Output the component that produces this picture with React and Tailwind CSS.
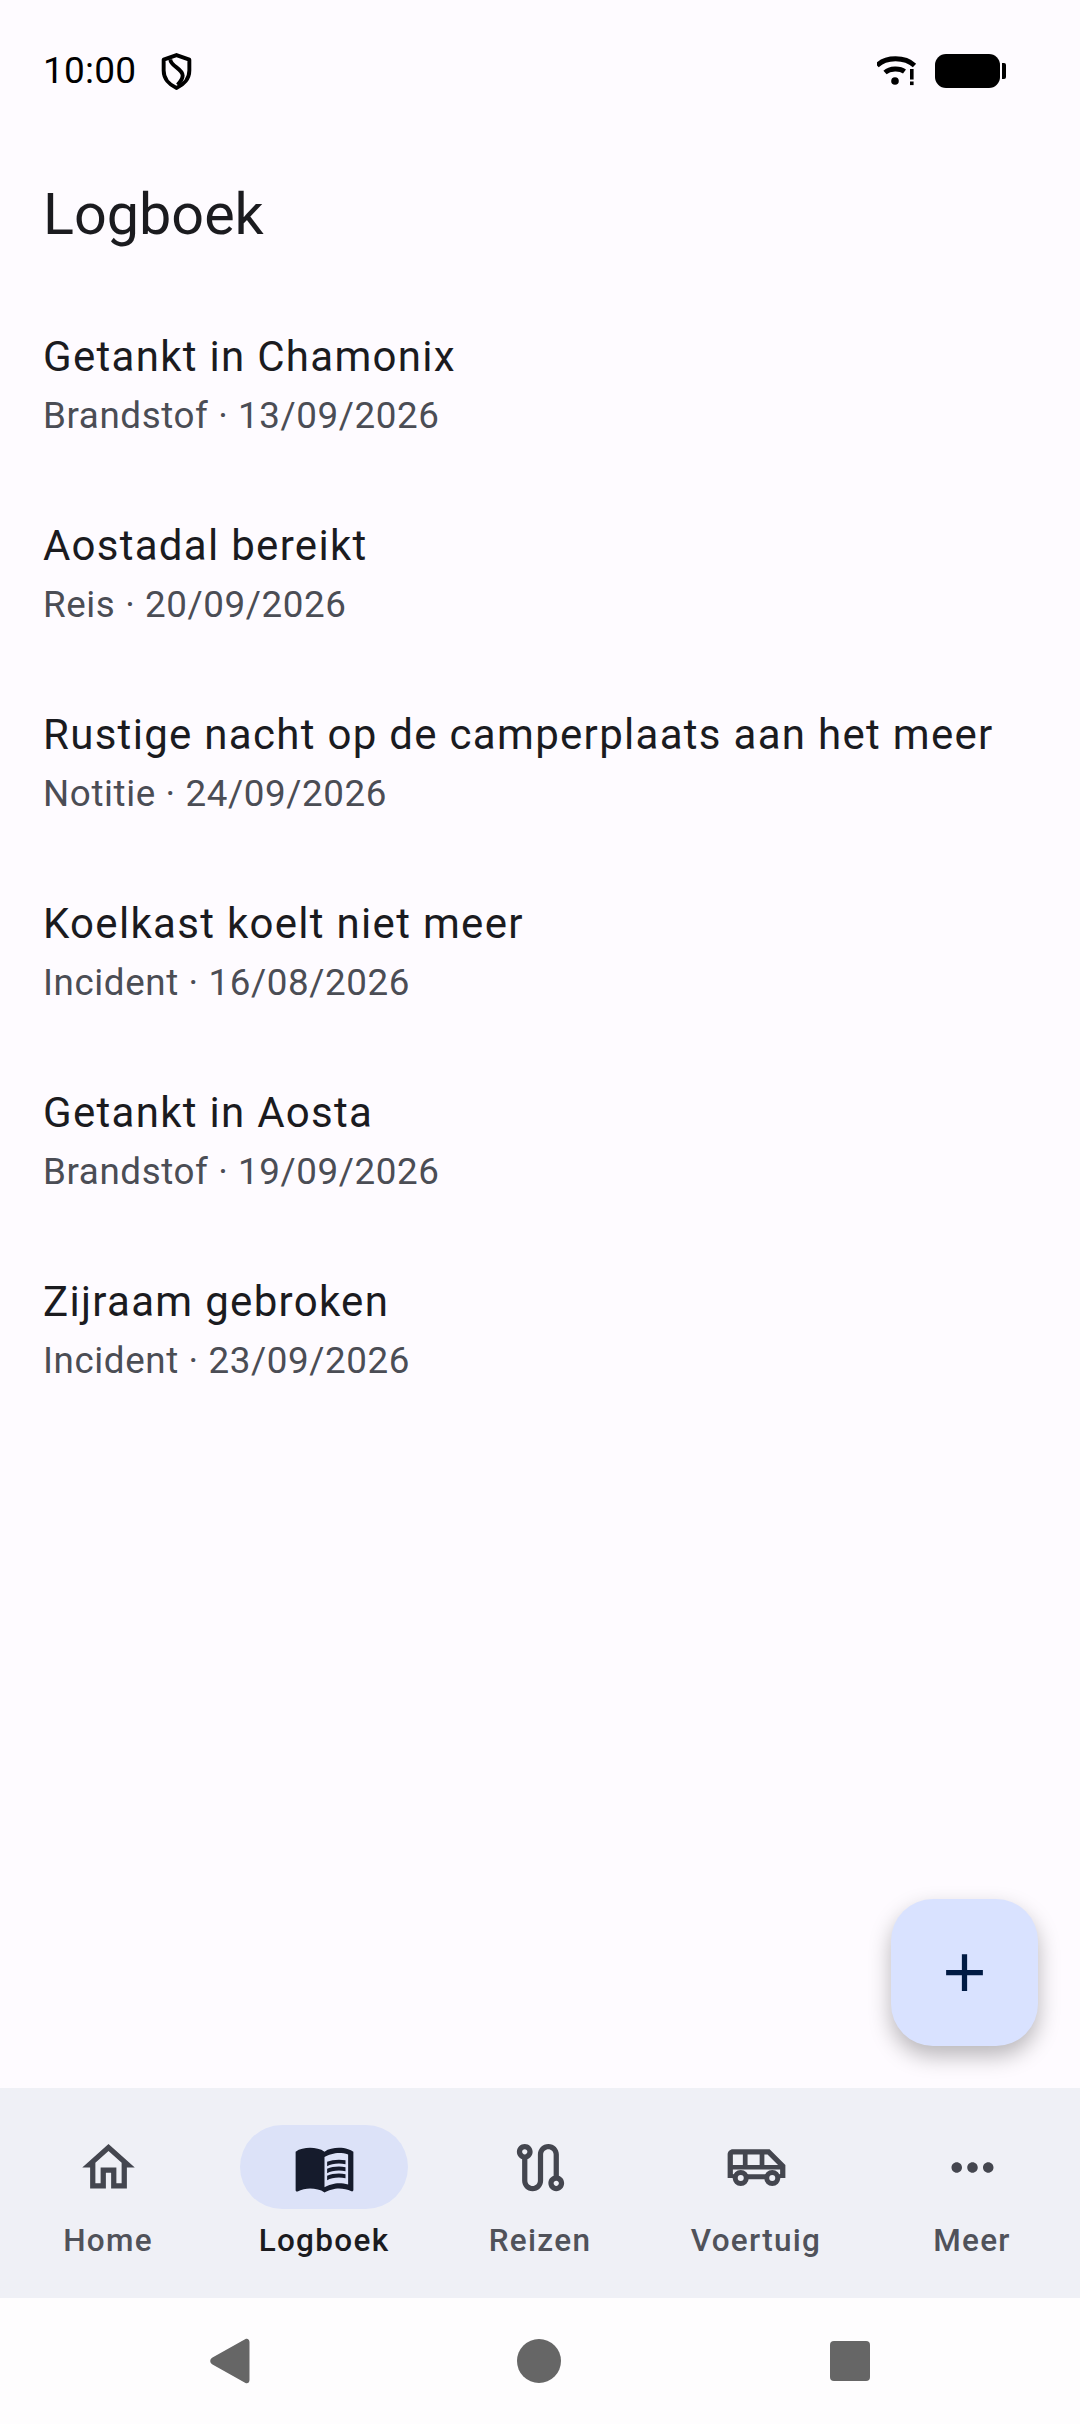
import React from 'react';

const entries = [
  { title: 'Getankt in Chamonix', sub: 'Brandstof · 13/09/2026' },
  { title: 'Aostadal bereikt', sub: 'Reis · 20/09/2026' },
  { title: 'Rustige nacht op de camperplaats aan het meer', sub: 'Notitie · 24/09/2026' },
  { title: 'Koelkast koelt niet meer', sub: 'Incident · 16/08/2026' },
  { title: 'Getankt in Aosta', sub: 'Brandstof · 19/09/2026' },
  { title: 'Zijraam gebroken', sub: 'Incident · 23/09/2026' },
];

const HomeIcon = () => (
  <svg viewBox="0 0 24 24" className="w-[63px] h-[63px]" fill="#44464f">
    <path d="M12 5.69l5 4.5V18h-2v-6H9v6H7v-7.81l5-4.5M12 3L2 12h3v8h6v-6h2v6h6v-8h3L12 3z" />
  </svg>
);

const BookIcon = () => (
  <svg viewBox="0 0 24 24" className="w-[63px] h-[63px]" fill="#151b2c">
    <path d="M21 5c-1.11-.35-2.33-.5-3.5-.5-1.95 0-4.05.4-5.5 1.5-1.45-1.1-3.55-1.5-5.5-1.5S2.45 4.9 1 6v14.65c0 .25.25.5.5.5.1 0 .15-.05.25-.05C3.1 20.45 5.05 20 6.5 20c1.95 0 4.05.4 5.5 1.5 1.35-.85 3.8-1.5 5.5-1.5 1.65 0 3.35.3 4.75 1.05.1.05.15.05.25.05.25 0 .5-.25.5-.5V6c-.6-.45-1.25-.75-2-1zm0 13.5c-1.1-.35-2.3-.5-3.5-.5-1.7 0-4.15.65-5.5 1.5V8c1.35-.85 3.8-1.5 5.5-1.5 1.2 0 2.4.15 3.5.5v11.5z" />
    <path d="M17.5 10.5c.88 0 1.73.09 2.5.26V9.24c-.79-.15-1.64-.24-2.5-.24-1.7 0-3.24.29-4.5.83v1.66c1.13-.64 2.7-.99 4.5-.99zM13 12.49v1.66c1.13-.64 2.7-.99 4.5-.99.88 0 1.73.09 2.5.26V11.9c-.79-.15-1.64-.24-2.5-.24-1.7 0-3.24.3-4.5.83zM17.5 14.33c-1.7 0-3.24.29-4.5.83v1.66c1.13-.64 2.7-.99 4.5-.99.88 0 1.73.09 2.5.26v-1.52c-.79-.16-1.64-.24-2.5-.24z" />
  </svg>
);

const RouteIcon = () => (
  <svg viewBox="0 0 24 24" className="w-[63px] h-[63px]" fill="#44464f">
    <path d="M19 15.18V7c0-2.21-1.79-4-4-4s-4 1.79-4 4v10c0 1.1-.9 2-2 2s-2-.9-2-2V8.82C8.16 8.4 9 7.3 9 6c0-1.66-1.34-3-3-3S3 4.34 3 6c0 1.3.84 2.4 2 2.82V17c0 2.21 1.79 4 4 4s4-1.79 4-4V7c0-1.1.9-2 2-2s2 .9 2 2v8.18c-1.16.41-2 1.51-2 2.82 0 1.66 1.34 3 3 3s3-1.34 3-3c0-1.3-.84-2.4-2-2.82zM6 7c-.55 0-1-.45-1-1s.45-1 1-1 1 .45 1 1-.45 1-1 1zm12 12c-.55 0-1-.45-1-1s.45-1 1-1 1 .45 1 1-.45 1-1 1z" />
  </svg>
);

const VanIcon = () => (
  <svg viewBox="0 0 24 24" className="w-[63px] h-[63px]" fill="#44464f">
    <path
      fillRule="evenodd"
      d="M17 5H3c-1.1 0-2 .9-2 2v9h2v.5h18V16h2v-5zM3 7h3.8v4H3zM8.6 7h4.6v4H8.6zM15 7h1.2l4 4H15zM3 12.8h18V14.6H3z"
    />
    <circle cx="6" cy="16" r="2.1" fill="#eff0f6" stroke="#44464f" strokeWidth="1.9" />
    <circle cx="18" cy="16" r="2.1" fill="#eff0f6" stroke="#44464f" strokeWidth="1.9" />
  </svg>
);

const MoreIcon = () => (
  <svg viewBox="0 0 24 24" className="w-[63px] h-[63px]" fill="#44464f">
    <path d="M6 10c-1.1 0-2 .9-2 2s.9 2 2 2 2-.9 2-2-.9-2-2-2zm12 0c-1.1 0-2 .9-2 2s.9 2 2 2 2-.9 2-2-.9-2-2-2zm-6 0c-1.1 0-2 .9-2 2s.9 2 2 2 2-.9 2-2-.9-2-2-2z" />
  </svg>
);

const tabs = [
  { label: 'Home', icon: <HomeIcon /> },
  { label: 'Logboek', icon: <BookIcon />, active: true },
  { label: 'Reizen', icon: <RouteIcon /> },
  { label: 'Voertuig', icon: <VanIcon /> },
  { label: 'Meer', icon: <MoreIcon /> },
];

const StatusBar = () => (
  <div className="h-[120px] flex items-center justify-between pl-[43px] pr-[74px] shrink-0 pt-[22px] text-black">
    <div className="flex items-center gap-[25px]">
      <span className="text-[37px] leading-[48px] tracking-[0.2px]">10:00</span>
      <svg viewBox="0 0 30 36" className="w-[31px] h-[37px]" fill="none" stroke="#000" strokeWidth="3.8">
        <path d="M15 2 L27.5 6.5 V17 C27.5 25 22 31 15 34 C8 31 2.5 25 2.5 17 V6.5 Z" strokeLinejoin="round" />
        <path d="M9 6 C9 13 21 15 21 22 C21 25 19 28 16 31" />
      </svg>
    </div>
    <div className="flex items-center gap-[18px]">
      <svg viewBox="0 0 40 30" className="w-[40px] h-[30px]" fill="#000">
        <path d="M0 9.5 C9 0.5 28 0.5 37.5 9.5" fill="none" stroke="#000" strokeWidth="4.8" />
        <path d="M8 16.5 C13 12 23 12 27.5 15.5" fill="none" stroke="#000" strokeWidth="4.8" />
        <circle cx="18" cy="25" r="3.8" />
        <rect x="33" y="13" width="3.6" height="10.5" />
        <rect x="33" y="25.5" width="3.6" height="3.6" />
      </svg>
      <div className="flex items-center gap-[2px]">
        <div className="w-[65px] h-[34px] rounded-[11px] bg-black" />
        <div className="w-[4px] h-[16px] rounded-r-[2px] bg-black" />
      </div>
    </div>
  </div>
);

const App = () => {
  return (
    <div className="w-[1080px] h-[2424px] flex flex-col bg-[#fefbff] font-['Roboto',sans-serif] overflow-hidden">
      <StatusBar />
      <div className="h-[168px] flex items-center px-[43px] pt-[22px] shrink-0">
        <h1 className="text-[57.5px] leading-[74px] text-[#1b1b1f]">Logboek</h1>
      </div>

      <div className="flex-1 relative">
        {entries.map((entry, i) => (
          <div key={i} className="h-[189px] px-[43px] pt-[2px] flex flex-col justify-center">
            <div className="text-[42px] leading-[63px] tracking-[1.3px] text-[#1b1b1f]">{entry.title}</div>
            <div className="mt-[2px] text-[36.75px] leading-[52.5px] tracking-[0.6px] text-[#4b4d55]">{entry.sub}</div>
          </div>
        ))}
        <button className="absolute right-[42px] bottom-[42px] w-[147px] h-[147px] rounded-[42px] bg-[#d9e2ff] flex items-center justify-center shadow-[0_10px_22px_rgba(0,0,0,0.28)]">
          <svg viewBox="0 0 24 24" className="w-[63px] h-[63px]" fill="#001a43">
            <path d="M19 13h-6v6h-2v-6H5v-2h6V5h2v6h6v2z" />
          </svg>
        </button>
      </div>

      <nav className="h-[210px] grid grid-cols-5 bg-[#eff0f6] pt-[37px] shrink-0">
        {tabs.map((tab) => (
          <div key={tab.label} className="flex flex-col items-center">
            <div className={`w-[168px] h-[84px] rounded-full flex items-center justify-center ${tab.active ? 'bg-[#dce2f8]' : ''}`}>
              {tab.icon}
            </div>
            <div className={`mt-[11px] text-[31.5px] leading-[42px] font-medium tracking-[1.3px] ${tab.active ? 'text-[#1b1b1f]' : 'text-[#50525a]'}`}>
              {tab.label}
            </div>
          </div>
        ))}
      </nav>

      <div className="h-[126px] flex items-center justify-center gap-[267px] pr-[1px] bg-[#fefdfe] shrink-0">
        <svg viewBox="0 0 40 46" className="w-[41px] h-[46px]" fill="#666666">
          <path d="M36 1 C38 0 40 1.5 40 4 V42 C40 44.5 38 46 36 45 L3 26.5 C0 25 0 21 3 19.5 Z" />
        </svg>
        <div className="w-[44px] h-[44px] rounded-full bg-[#666666]" />
        <div className="ml-[2px] w-[40px] h-[40px] rounded-[4px] bg-[#666666]" />
      </div>
    </div>
  );
};

export default App;
